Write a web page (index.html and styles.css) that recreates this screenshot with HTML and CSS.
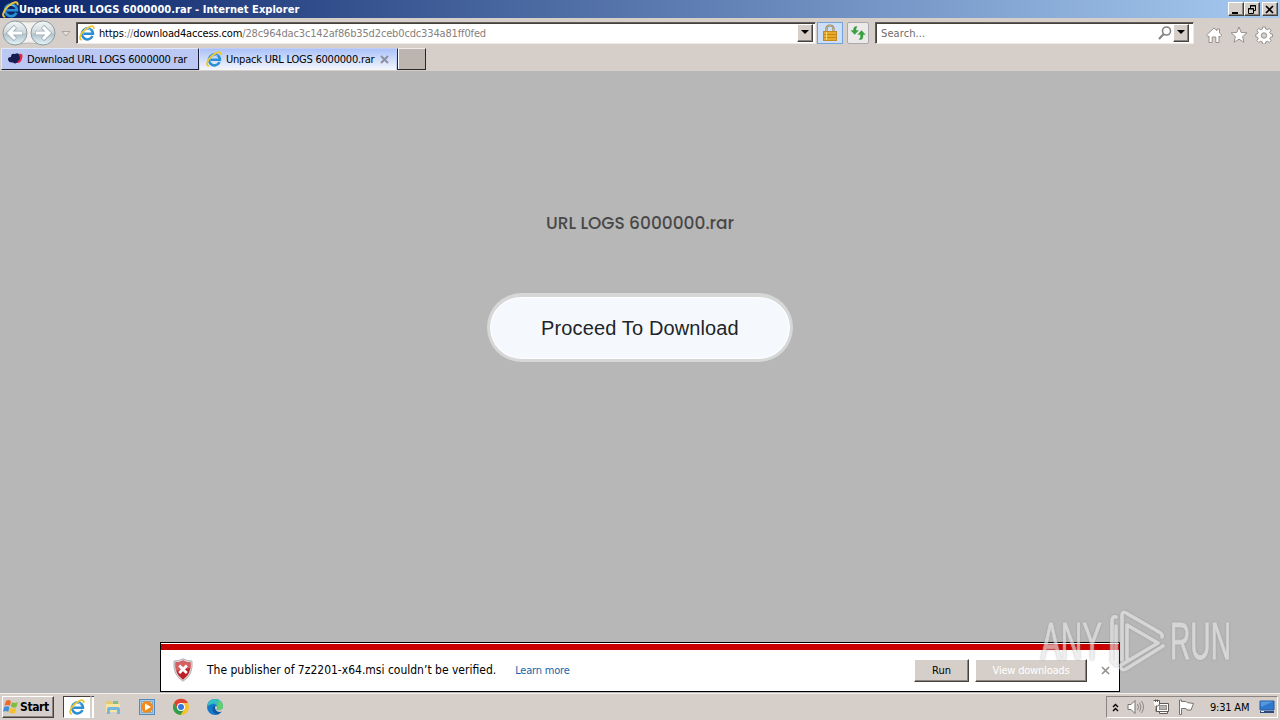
FILE: index.html
```
<!DOCTYPE html>
<html lang="en">

<head>
    <meta charset="UTF-8">
    <meta name="viewport" content="width=device-width, initial-scale=1.0">
    <title>Unpack URL LOGS 6000000.rar</title>
    <link rel="stylesheet" href="styles.css">
</head>

<body>
    <!-- Shared icons -->
    <svg class="defs" width="0" height="0">
        <symbol id="ie" viewBox="0 0 18 18">
            <path d="M15.2 12.4A6.2 6.2 0 1 1 15.700 9.800H5" fill="none" stroke="#2b8fd3" stroke-width="2.800" />
            <path d="M4.600 8.200A5 5 0 0 1 13 5.600" fill="none" stroke="#8fd8f7" stroke-width="1.100" />
            <path d="M3.400 16.700C-.8 17 1.200 10.200 6.800 5.300 11.800 .9 17.800-.5 16.300 4.600" fill="none" stroke="#f0c534" stroke-width="2" />
        </symbol>
    </svg>

    <div class="title-bar">
        <svg class="title-icon"><use href="#ie" /></svg>
        <span class="title">Unpack URL LOGS 6000000.rar - Internet Explorer</span>
        <div class="window-buttons">
            <button><svg width="14" height="11"><path d="M3 9H9" stroke="#000" stroke-width="2" /></svg></button>
            <button><svg width="14" height="11"><path d="M5.5 4V1.5H10.5V6.5H9M5 2H11M3.5 4.5H8.5V9.5H3.5ZM3 5H9" fill="none" stroke="#000" /></svg></button>
            <button class="close"><svg width="14" height="11"><path d="M3 2L10 9M10 2L3 9" stroke="#000" stroke-width="1.7" /></svg></button>
        </div>
    </div>

    <div class="nav-bar">
        <svg class="history" width="72" height="29" viewBox="0 0 72 29">
            <defs>
                <linearGradient id="ball" x2="0" y2="1">
                    <stop offset="0" stop-color="#f5f7f7" />
                    <stop offset=".48" stop-color="#d0d8dc" />
                    <stop offset=".55" stop-color="#b4c3cb" />
                    <stop offset="1" stop-color="#e3f5fa" />
                </linearGradient>
            </defs>
            <path d="M15 3Q29 5 43 3V27Q29 23 15 27Z" fill="#f3f1ef" stroke="#b9b7b3" />
            <circle cx="15" cy="15" r="12" fill="url(#ball)" stroke="#8d9a9f" />
            <circle cx="43" cy="15" r="12" fill="url(#ball)" stroke="#8d9a9f" />
            <path d="M22.500 15H10M15.500 8.500L9 15L15.500 21.500" fill="none" stroke="#9eafb9" stroke-width="4.6" />
            <path d="M22 15H10M15 9L9 15L15 21" fill="none" stroke="#fff" stroke-width="3" />
            <path d="M35.500 15H48M42.500 8.500L49 15L42.500 21.500" fill="none" stroke="#9eafb9" stroke-width="4.6" />
            <path d="M36 15H48M43 9L49 15L43 21" fill="none" stroke="#fff" stroke-width="3" />
            <path d="M62 13.5H70L66 18Z" fill="#e4e0dc" stroke="#aaa6a1" />
        </svg>
        <div class="field address">
            <svg class="icon-16"><use href="#ie" /></svg>
            <span class="url"><b>https</b>://<b>download4access.com</b>/28c964dac3c142af86b35d2ceb0cdc334a81ff0fed</span>
            <button class="drop"><svg width="8" height="5"><path d="M0 0H8L4 4Z" /></svg></button>
        </div>
        <button class="lock">
            <svg width="16" height="18" viewBox="0 0 16 18">
                <path d="M4.5 9V5Q4.5 1.5 8 1.5T11.5 5V9" fill="none" stroke="#96845b" stroke-width="2.2" />
                <path d="M4.5 9V5Q4.5 1.5 8 1.5T11.5 5V9" fill="none" stroke="#d9cda9" stroke-width=".7" />
                <rect x="1.5" y="7.5" width="13" height="9" fill="#e8ab27" stroke="#c38a23" />
                <path d="M2 10.5H14M2 13.5H14" stroke="#c78518" />
                <path d="M4.5 8V16" stroke="#f8d76e" />
            </svg>
        </button>
        <button class="refresh">
            <svg width="18" height="18" viewBox="0 0 18 18">
                <path d="M8 2.500H6.500Q4.500 3 4.500 5.500V6.500H2L5.700 10.500L9.500 6.500H7V5ZM10 15.500H12Q14 15 14 12.500V10.500H16.300L12.500 6.500L8.800 10.500H11.500V13.500Z" fill="#36a340" stroke="#288232" stroke-width=".3" />
            </svg>
        </button>
        <div class="field search">
            <span class="placeholder">Search...</span>
            <svg width="14" height="14" viewBox="0 0 14 14"><circle cx="8.5" cy="5" r="4" fill="none" stroke="#85817e" stroke-width="1.6" /><path d="M5.7 8L1 13" stroke="#85817e" stroke-width="2" /></svg>
            <button class="drop"><svg width="8" height="5"><path d="M0 0H8L4 4Z" /></svg></button>
        </div>
        <div class="tools">
            <svg width="18" height="18" viewBox="0 0 18 18"><path d="M1.5 9L9 2L12 4.7V3H14.5V7L16.8 9L15 10.8L14 10V16.5H10.8V11H7.2V16.5H4V10L3 10.8Z" fill="#fff" stroke="#96918d" /></svg>
            <svg width="18" height="18" viewBox="0 0 18 18"><path d="M9 1L11.2 6.4L17 6.8L12.6 10.6L14 16.3L9 13.2L4 16.3L5.4 10.6L1 6.8L6.8 6.4Z" fill="#fff" stroke="#96918d" /></svg>
            <svg width="18" height="18" viewBox="0 0 18 18">
                <path d="M7.6 1h2.8l.4 2.2 1.5.6 1.9-1.3 1.9 1.9-1.3 1.9.6 1.5 2.1.4v2.6l-2.1.4-.6 1.5 1.3 1.9-1.9 1.9-1.9-1.3-1.5.6-.4 2.2H7.6l-.4-2.2-1.5-.6-1.9 1.3-1.9-1.9 1.3-1.9-.6-1.5L.8 10.8V8.2l1.8-.4.6-1.5-1.3-1.9 1.9-1.9 1.9 1.3 1.5-.6Z" fill="#fff" stroke="#96918d" />
                <circle cx="9" cy="9.5" r="2.7" fill="#d6cfc9" stroke="#96918d" />
            </svg>
        </div>
    </div>

    <div class="tab-bar">
        <div class="tab">
            <svg class="icon-16" viewBox="0 0 16 16"><path d="M8 12L10 8L12 3Q16 2 15.5 6Q15 10 12 12Z" fill="#e22949" /><path d="M1 9Q.5 6 4 6Q4 2 8 3Q12 1 12.5 5Q14 8 11 10Q9 14 6 11.500Q2 12 1 9Z" fill="#171b52" /></svg>
            <span>Download URL LOGS 6000000 rar</span>
        </div>
        <div class="tab active">
            <svg class="icon-16"><use href="#ie" /></svg>
            <span>Unpack URL LOGS 6000000.rar</span>
            <svg class="tab-close" width="9" height="9"><path d="M1 1L8 8M8 1L1 8" stroke="#8d90a2" stroke-width="2" /></svg>
        </div>
        <div class="new-tab"></div>
    </div>

    <main class="page">
        <h1>URL LOGS 6000000.rar</h1>
        <button class="proceed"><span>Proceed To Download</span></button>

        <div class="notification">
            <svg class="shield" width="20" height="24" viewBox="0 0 20 24">
                <path d="M10 .8Q14 3 19 3Q20.5 17 10 23.3Q-.5 17 1 3Q6 3 10 .8Z" fill="#dedbdb" stroke="#a7a1a1" stroke-width=".8" />
                <path d="M10 2.500Q13.5 4.300 17.500 4.500Q18.500 16 10 21.700Q1.500 16 2.500 4.500Q6.5 4.300 10 2.500Z" fill="#bd2029" />
                <path d="M10 2.500Q13.5 4.300 17.500 4.500V10L3 13L2.500 4.500Q6.5 4.300 10 2.500Z" fill="#d56063" />
                <path d="M6.200 7.500L13.800 15M13.800 7.500L6.200 15" stroke="#fff" stroke-width="2.8" />
            </svg>
            <span class="message">The publisher of 7z2201-x64.msi couldn’t be verified.</span>
            <a class="learn-more">Learn more</a>
            <button class="run">Run</button>
            <button class="view">View downloads</button>
            <svg class="dismiss" width="9" height="9"><path d="M1 1L8 8M8 1L1 8" stroke="#96918d" stroke-width="1.7" /></svg>
        </div>

        <svg class="watermark" width="210" height="70" viewBox="0 0 210 70">
            <g class="mark-text">
                <text x="6" y="53" textLength="61" lengthAdjust="spacingAndGlyphs">ANY</text>
                <text x="135" y="53" textLength="61" lengthAdjust="spacingAndGlyphs">RUN</text>
            </g>
            <path class="mark-play" d="M81 11Q77 10 77 15V55L81 59V20M87 54V9Q87 5 91 7L124 26Q128 28 127 31M92 53V19L123 37L86 59M128 40L91 63Q87 65 86 62" />
        </svg>
    </main>

    <footer class="taskbar">
        <button class="start">
            <svg width="16" height="16" viewBox="0 0 16 16">
                <path d="M3 2Q6 0 8 2.5L6.8 7Q4.5 5 1.5 6.8Z" fill="#ef692c" />
                <path d="M9 3Q12 5 15 3L13.5 8Q10.5 9.5 7.8 7.5Z" fill="#82bd42" />
                <path d="M1.2 8Q4 6.2 6.5 8.2L5.2 13Q3 11 0 12.7Z" fill="#408ed5" />
                <path d="M7.5 8.8Q10 10.5 13.2 9L12 13.7Q9 15.5 6.2 13.5Z" fill="#f5c02c" />
            </svg>
            <span>Start</span>
        </button>
        <div class="task"><svg class="icon-16"><use href="#ie" /></svg></div>
        <div class="task-edge"></div>
        <div class="pinned">
            <svg width="18" height="18" viewBox="0 0 18 18">
                <path d="M2 5V3H7L8 5H15V14H2Z" fill="#e7ca70" />
                <path d="M2 6H16V14H2Z" fill="#f6e6a5" />
                <path d="M9 3H14V6H9Z" fill="#86bd85" />
                <path d="M3 16V11Q3 9 5 9H14Q16 9 16 11V16H13V12H6V16Z" fill="#75b7df" />
            </svg>
            <svg width="18" height="18" viewBox="0 0 18 18">
                <rect x="1.5" y="1.5" width="15" height="15" fill="#a8cbe8" stroke="#568abd" />
                <rect x="3.5" y="3.5" width="11" height="11" fill="#d5e7f4" stroke="#7caed4" />
                <circle cx="9" cy="9" r="6" fill="#f28b1e" />
                <path d="M7 5.5L13 9L7 12.5Z" fill="#fff" />
            </svg>
            <svg width="18" height="18" viewBox="0 0 18 18">
                <circle cx="9" cy="9" r="8" fill="#f8c22c" />
                <path d="M9 9L5.5 11L2 5A8 8 0 0 1 16 5H9Z" fill="#df4335" />
                <path d="M2 5A8 8 0 0 0 8.5 17L12.3 11H9L5.5 11Z" fill="#309d4e" />
                <circle cx="9" cy="9" r="4" fill="#fff" />
                <circle cx="9" cy="9" r="3" fill="#3975db" />
            </svg>
            <svg width="18" height="18" viewBox="0 0 18 18">
                <circle cx="9" cy="9" r="8" fill="#1678c8" />
                <path d="M1 9C2 3 5 1 9 1C14 1 17 4.5 17 8.5C17 12 13 13 10.5 11.5C13 8 9 5 6 6Q3 6.5 1 9Z" fill="#35bfc0" />
                <path d="M13 2Q17 5 17 8.5C17 12 13 13 10.5 11.5Q12 10 11.5 8Z" fill="#65cd69" />
                <path d="M10.5 11.5Q13 13 16.5 11.5Q15 15 11.5 16.5Q6 15 6.5 10Q7 8 9 7.5Q11.5 9 10.5 11.5Z" fill="#10599e" />
                <path d="M10.5 11.5Q14 13.5 17 10V13L14 14Q10 14 9 10Q9 8 10 7.8Q12 9 10.5 11.5Z" fill="#d6cfc9" />
            </svg>
        </div>
        <div class="tray">
            <svg width="7" height="9"><path d="M1 4L3.5 1.5L6 4M1 8L3.5 5.5L6 8" fill="none" stroke="#000" stroke-width="1.4" /></svg>
            <svg width="18" height="16" viewBox="0 0 18 16"><path d="M1 5.5H4L8 1.5V14.5L4 10.5H1Z" fill="#fff" stroke="#77736f" /><path d="M10.5 5Q12.5 8 10.5 11M12.5 3.5Q15.5 8 12.5 12.5M14.5 2Q18.5 8 14.5 14" fill="none" stroke="#8b8783" /></svg>
            <svg width="17" height="16" viewBox="0 0 17 16"><path d="M3.500 4.500H15.500V12.500H3.500ZM6.500 12.500V14.500H14.500V12.500" fill="#fff" stroke="#5f5b58" /><rect x="6.5" y="6.5" width="7" height="4" fill="#b8b3ae" stroke="#96918d" /><path d="M.5 1.5H6.500V5.5L4.500 7H3V12.500M2.5 .5V3M4.500 .5V3" fill="#fff" stroke="#5f5b58" /></svg>
            <svg width="17" height="16" viewBox="0 0 17 16"><path d="M1.5 1V15.5H3.500V9.5H8L9 11H13L15.500 4.500L9 3.500L8 2.500H3.500V1Z" fill="#fff" stroke="#77736f" /></svg>
            <span class="clock">9:31 AM</span>
            <svg width="16" height="14" viewBox="0 0 16 14"><path d="M1 1H15V10H1Z" fill="#2f78cd" stroke="#2457a0" /><path d="M1.5 1.5H14L2 7Z" fill="#5597db" /><path d="M1 11H15V13H1Z" fill="#29497f" /><path d="M2 11.5H5" stroke="#e4edf6" /></svg>
        </div>
    </footer>
</body>

</html>
```
FILE: styles.css
```
* {
    box-sizing: border-box;
}

body {
    width: 1280px;
    height: 720px;
    margin: 0;
    overflow: hidden;
    display: flex;
    flex-direction: column;
    background: #d6cfc9;
    color: #000;
    font-family: "DejaVu Sans Condensed", "DejaVu Sans", sans-serif;
    font-size: 11px;
}

svg {
    display: block;
    flex-shrink: 0;
}

button {
    font: inherit;
    padding: 0;
    background: #d6cfc9;
    border: 1px solid;
    border-color: #fff #45413d #45413d #fff;
    box-shadow: inset -1px -1px #8a8580;
}

span,
a {
    white-space: nowrap;
}

.defs {
    position: absolute;
}

.icon-16 {
    width: 16px;
    height: 16px;
}

.title-bar {
    height: 18px;
    display: flex;
    align-items: center;
    padding: 0 2px;
    background: linear-gradient(90deg, #0a246a, #a6caf0);
    color: #fff;
    font-weight: bold;
}

.title-icon {
    width: 17px;
    height: 17px;
}

.title {
    letter-spacing: 0.04px;
}

.window-buttons {
    display: flex;
    margin-left: auto;
}

.window-buttons button {
    width: 16px;
    height: 14px;
}

.window-buttons .close {
    margin-left: 2px;
}

.nav-bar {
    height: 29px;
    display: flex;
    align-items: center;
}

.history {
    margin-right: 4px;
}

.field {
    height: 22px;
    display: flex;
    align-items: center;
    background: #fff;
    border: 1px solid;
    border-color: #625d59 #eeeae7 #eeeae7 #625d59;
    box-shadow: inset 1px 1px #45413d;
}

.address {
    width: 740px;
    padding: 0 2px 0 2px;
}

.url {
    margin-left: 4px;
    padding-top: 2px;
    color: #85817e;
    letter-spacing: -0.15px;
}

.url b {
    color: #000;
    font-weight: normal;
}

.drop {
    width: 16px;
    height: 18px;
    display: flex;
    align-items: center;
    justify-content: center;
}

.address .drop {
    margin-left: auto;
}

.lock,
.refresh {
    display: flex;
    align-items: center;
    justify-content: center;
    box-shadow: none;
}

.lock {
    width: 26px;
    height: 22px;
    margin-left: 1px;
    background: #cbdffb;
    border-color: #74a2dc;
}

.refresh {
    width: 22px;
    height: 22px;
    margin-left: 4px;
    background: #ebeae8;
    border-color: #aaa9ae;
    border-radius: 2px;
}

.search {
    width: 319px;
    margin-left: 6px;
    padding: 0 4px 0 5px;
}

.placeholder {
    margin-right: auto;
    padding-top: 2px;
    color: #6f6b68;
    letter-spacing: 0.1px;
}

.search .drop {
    margin-left: 1px;
}

.tools {
    display: flex;
    gap: 7px;
    margin: 4px 0 0 11px;
}

.tab-bar {
    height: 24px;
    display: flex;
    align-items: flex-start;
    padding: 1px 0 0 1px;
}

.tab {
    width: 198px;
    height: 22px;
    display: flex;
    align-items: center;
    padding-left: 5px;
    background: #bac8f3;
    border: 1px solid;
    border-color: #e2e8fb #1c2034 #1c2034 #e2e8fb;
}

.tab span {
    margin-left: 4px;
    padding-top: 1px;
    letter-spacing: -0.22px;
}

.tab.active {
    padding-left: 6px;
    background: linear-gradient(#abc2f9, #f2f5fc);
    border-color: #bfcef6 #bfcef6 #f2f5fc #d5def8;
}

.tab-close {
    margin-left: 6px;
}

.new-tab {
    width: 29px;
    height: 22px;
    background: #bcb5af;
    border: 1px solid;
    border-color: #eeeae7 #292624 #292624;
    box-shadow: inset 1px 0 #fff;
}

.page {
    position: relative;
    height: 622px;
    display: flex;
    flex-direction: column;
    align-items: center;
    background: #b7b7b7;
}

h1 {
    height: 24px;
    margin: 140px 0 0;
    color: #484848;
    font: 500 17px/24px Poppins, Inter, sans-serif;
    white-space: nowrap;
}

.proceed {
    width: 306px;
    height: 69px;
    margin-top: 58px;
    background: #f5f9fd;
    border: 3px solid #d7d7d7;
    border-top-width: 4px;
    border-radius: 35px;
    box-shadow: inset 0 0 0 1px #fff;
    color: #212529;
    font: 20px "Liberation Sans", Arial, sans-serif;
    letter-spacing: 0.13px;
}

.notification {
    width: 960px;
    height: 50px;
    margin-top: auto;
    margin-bottom: 1px;
    display: flex;
    align-items: center;
    padding: 6px 9px 0 12px;
    border: 1px solid #000;
    background: linear-gradient(#fff 1px, #c90000 1px, #c90000 7px, #fff 7px);
}

.message {
    margin-left: 14px;
    font-size: 12px;
}

.learn-more {
    margin-left: 19px;
    color: #1664ad;
    letter-spacing: -0.2px;
}

.run,
.view {
    height: 23px;
}

.run {
    width: 55px;
    margin-left: auto;
}

.view {
    width: 112px;
    margin: 0 14px 0 6px;
    color: #fff;
    letter-spacing: -0.2px;
}

.watermark {
    position: absolute;
    left: 1035px;
    top: 535px;
    opacity: 0.65;
    filter: drop-shadow(0 0 1px #8d8d8d);
}

.mark-text {
    fill: #e8e8e8;
    stroke: #e8e8e8;
    stroke-width: 0.8;
    font: 51px "Liberation Sans Narrow", "Liberation Sans", sans-serif;
}

.mark-play {
    fill: none;
    stroke: #e8e8e8;
    stroke-width: 3.6;
    stroke-linejoin: round;
    stroke-linecap: round;
}

.taskbar {
    height: 27px;
    display: flex;
    align-items: center;
    padding: 0 2px;
    border-top: 1px solid #f2f0ee;
}

.start {
    width: 52px;
    height: 22px;
    display: flex;
    align-items: center;
    font-weight: bold;
}

.start svg {
    margin: 0 1px 0 0;
}

.start span {
    font-size: 12px;
    letter-spacing: -0.4px;
}

.task {
    width: 28px;
    height: 22px;
    display: flex;
    align-items: center;
    margin-left: 9px;
    padding-left: 5px;
    background: #fff;
    border: 1px solid;
    border-color: #45413d #d6cfc9 #fff #45413d;
}

.task-edge {
    width: 3px;
    height: 22px;
    background: #fff;
    border-top: 1px solid #45413d;
    border-left: 1px solid #d6cfc9;
}

.pinned {
    display: flex;
    gap: 16px;
    margin-left: 10px;
}

.tray {
    width: 172px;
    height: 22px;
    display: flex;
    align-items: center;
    margin-left: auto;
    padding-left: 5px;
    border: 1px solid;
    border-color: #8a8580 #fff #fff #8a8580;
}

.tray svg + svg {
    margin-left: 8px;
}

.clock {
    margin: 0 10px 0 15px;
    letter-spacing: -0.2px;
}
```
